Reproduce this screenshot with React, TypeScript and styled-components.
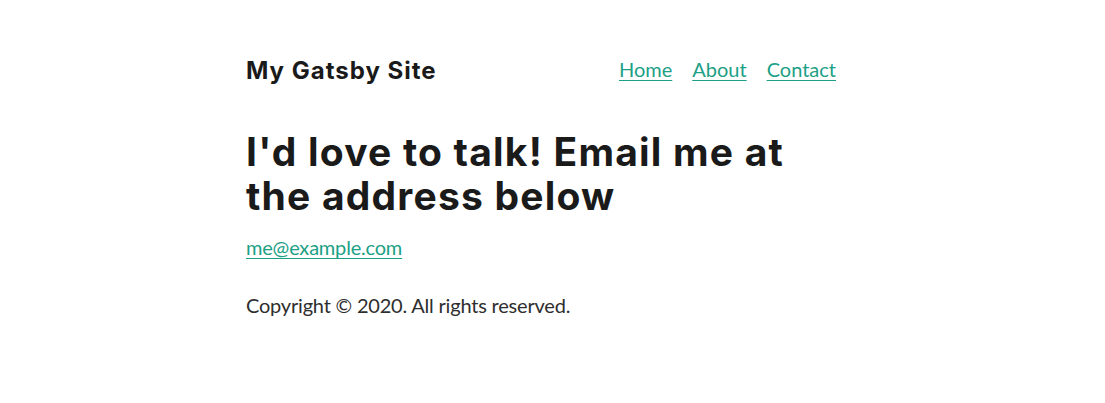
import React from 'react'
import styled, { createGlobalStyle } from 'styled-components'

const GlobalStyle = createGlobalStyle`
  html, body {
    margin: 0;
    padding: 0;
    background: #ffffff;
  }
  body {
    font-family: Lato, "Open Sans", sans-serif;
    font-size: 20px;
    color: #2e2e2e;
  }
`

const Page = styled.div`
  display: flex;
  justify-content: center;
  padding: 0 23px 0 0;
`

const Container = styled.main`
  width: 590px;
  padding-top: 52px;
`

const Header = styled.header`
  display: flex;
  align-items: center;
  justify-content: space-between;
  height: 36px;
  margin-bottom: 42px;
`

const SiteTitle = styled.h3`
  margin: 0;
  font-family: Inter, "Open Sans", sans-serif;
  font-weight: 700;
  font-size: 24px;
  letter-spacing: 1px;
  color: #1a1a1a;
`

const Nav = styled.nav`
  display: flex;
  gap: 20px;
  margin-top: -3px;
`

const Link = styled.a`
  color: #1ca086;
  text-decoration: underline;
  text-underline-offset: 3px;
  text-decoration-thickness: 1px;
`

const Heading = styled.h1`
  margin: 0 0 14px;
  font-family: Inter, "Open Sans", sans-serif;
  font-weight: 700;
  font-size: 39px;
  line-height: 44px;
  letter-spacing: 1.2px;
  color: #1a1a1a;
`

const Paragraph = styled.p`
  margin: 0 0 28px;
  line-height: 30px;
  letter-spacing: -0.2px;
`

const ContactPage = () => (
  <Page>
    <Container>
      <Header>
        <SiteTitle>My Gatsby Site</SiteTitle>
        <Nav>
          <Link href="#">Home</Link>
          <Link href="#">About</Link>
          <Link href="#">Contact</Link>
        </Nav>
      </Header>
      <Heading>I'd love to talk! Email me at the address below</Heading>
      <Paragraph>
        <Link href="#">me@example.com</Link>
      </Paragraph>
      <Paragraph>Copyright © 2020. All rights reserved.</Paragraph>
    </Container>
  </Page>
)

export default function App() {
  return (
    <>
      <GlobalStyle />
      <ContactPage />
    </>
  )
}
